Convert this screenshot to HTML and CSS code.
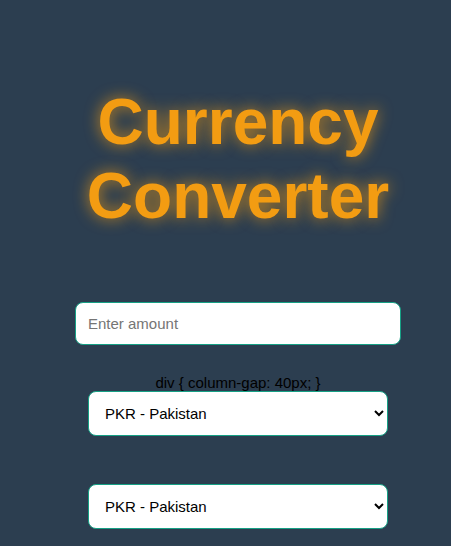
FILE: index.html
```html
<!DOCTYPE html>
<html lang="en">
<head>
<meta charset="utf-8">
<meta name="viewport" content="width=device-width, initial-scale=1">
<title>Currency Converter</title>
<link rel="stylesheet" href="styles.css">
</head>
<body>
<main class="converter">
  <h1 class="title">Currency Converter</h1>
  <input class="amount" type="text" placeholder="Enter amount" aria-label="Amount">
  <div class="note">div { column-gap: 40px; }</div>
  <div class="currencies">
    <select class="currency" aria-label="From currency"><option>PKR - Pakistan</option></select>
    <select class="currency" aria-label="To currency"><option>PKR - Pakistan</option></select>
  </div>
</main>
</body>
</html>
```
FILE: styles.css
```css
* {
  box-sizing: border-box;
}

body {
  margin: 0;
  min-height: 100vh;
  background: #2c3e50;
  font-family: "Liberation Sans", Arial, sans-serif;
  font-size: 15px;
}

.converter {
  display: flex;
  flex-direction: column;
  align-items: center;
  padding: 85px 50px 16px 75px;
}

.title {
  margin: 0 0 69px;
  font-size: 64px;
  line-height: 74px;
  text-align: center;
  color: #f39c12;
  text-shadow: 0 0 15px rgba(243, 156, 18, 0.8);
}

.amount,
.currency {
  border: 1px solid #16a085;
  border-radius: 8px;
  background: #fff;
  font-family: inherit;
  font-size: 15px;
}

.amount {
  width: 100%;
  height: 43px;
  padding: 0 12px;
}

.note {
  margin-top: 30px;
  line-height: 16px;
  color: #000;
}

.currencies {
  display: flex;
  flex-direction: column;
  gap: 48px;
  width: 300px;
}

.currency {
  width: 100%;
  height: 45px;
  padding: 0 1px 0 12px;
  color: #000;
}
```
